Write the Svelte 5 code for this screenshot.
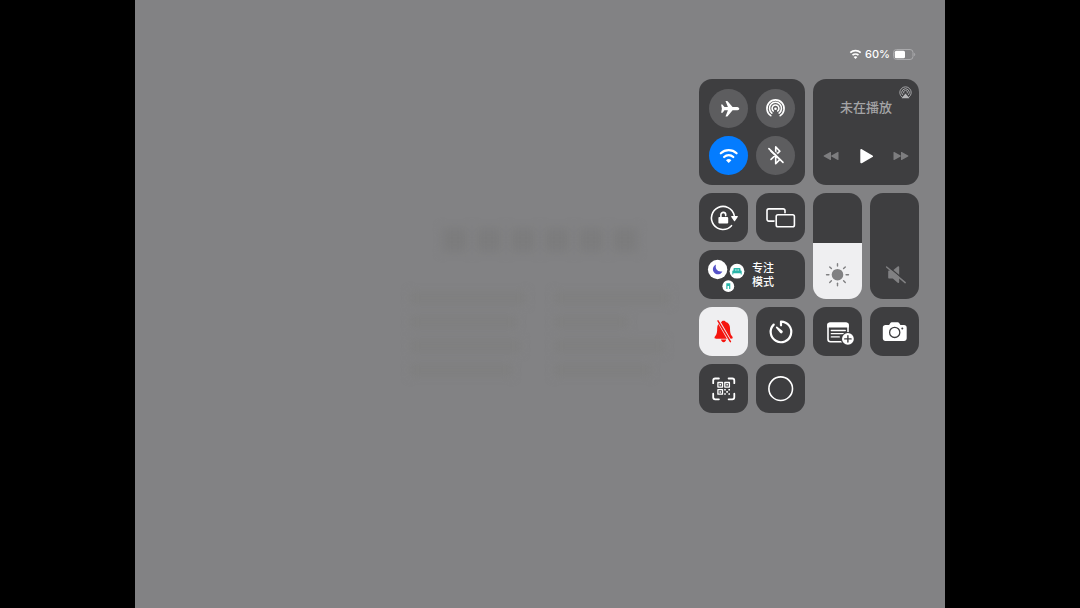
<script>
	let airplane = $state(false);
	let airdrop = $state(false);
	let wifi = $state(true);
	let bluetooth = $state(false);
	let silent = $state(true);
	let playing = $state(false);
	let brightness = $state(53);
	let volume = $state(0);

	const battery = 60;
	const rays = [0, 45, 90, 135, 180, 225, 270, 315];
	const columns = [
		[100, 92, 96, 88],
		[100, 64, 96, 84]
	];
</script>

<main>
	<div class="wallpaper" aria-hidden="true">
		<div class="title">
			{#each { length: 6 } as _}
				<div class="blob"></div>
			{/each}
		</div>
		<div class="columns">
			{#each columns as lines}
				<div class="column">
					{#each lines as width}
						<div class="line" style="width: {width}%"></div>
					{/each}
				</div>
			{/each}
		</div>
	</div>

	<div class="panel">
		<header class="status">
			<svg width="13" height="10" viewBox="0 0 13 10" role="img" aria-label="Wi-Fi">
				<path class="line-art heavy" d="M1.3 3.6a7.6 7.6 0 0 1 10.4 0M3.5 6.2a4.4 4.4 0 0 1 6 0" />
				<path class="solid" d="M6.5 10 4.6 8.1a2.7 2.7 0 0 1 3.8 0z" />
			</svg>
			<span>{battery}%</span>
			<svg width="23" height="11" viewBox="0 0 23 11" role="img" aria-label="电池">
				<rect x="0.5" y="0.5" width="19.5" height="10" rx="3" fill="none" stroke="#aaaaac" />
				<rect class="solid" x="1.8" y="1.8" width={(battery / 100) * 17} height="7.4" rx="1.5" />
				<path d="M21.2 3.8c1.4.4 1.4 3 0 3.4z" fill="#aaaaac" />
			</svg>
		</header>

		<div class="grid">
			<section class="tile big radios">
				<button class="round" class:on={airplane} aria-label="飞行模式" aria-pressed={airplane} onclick={() => (airplane = !airplane)}>
					<svg viewBox="0 0 39 39">
						<path class="solid" d="M30.3 19.7c0-1.1-1.5-1.6-2.9-1.6h-3.8l-4.8-5.7c-.3-.4-.6-.5-1-.5h-1.3l2.4 6.2h-3.4l-1.7-2.1c-.2-.3-.4-.4-.7-.4h-1l.8 4.1-.8 4.1h1c.3 0 .5-.1.7-.4l1.7-2.1h3.4l-2.4 6.2h1.3c.4 0 .7-.1 1-.5l4.8-5.7h3.8c1.4 0 2.9-.5 2.9-1.6z" />
					</svg>
				</button>
				<button class="round" class:on={airdrop} aria-label="隔空投送" aria-pressed={airdrop} onclick={() => (airdrop = !airdrop)}>
					<svg viewBox="0 0 39 39">
						<path class="line-art" d="M14.8 26.7a8.6 8.6 0 1 1 9.4 0M15.9 24.1a6 6 0 1 1 7.2 0M17.3 22a3.4 3.4 0 1 1 4.4 0" />
						<circle class="solid" cx="19.5" cy="19.7" r="1.3" />
					</svg>
				</button>
				<button class="round" class:on={wifi} aria-label="无线局域网" aria-pressed={wifi} onclick={() => (wifi = !wifi)}>
					<svg viewBox="0 0 39 39">
						<path class="line-art heavy" d="M11.8 17.3a11.4 11.4 0 0 1 15.8 0M15.1 21a6.6 6.6 0 0 1 9.2 0" />
						<path class="solid" d="m19.7 26.9-2.7-2.6a3.8 3.8 0 0 1 5.4 0z" />
					</svg>
				</button>
				<button class="round" class:on={bluetooth} aria-label="蓝牙" aria-pressed={bluetooth} onclick={() => (bluetooth = !bluetooth)}>
					<svg viewBox="0 0 39 39">
						<path class="line-art" d="m15 15.2 8.9 8.2-4.2 4.3V10.9l4.2 4.3-8.9 8.2" />
						<path d="m14 11.5 14 14" stroke="#5d5d5f" stroke-width="1.4" />
						<path class="line-art" d="M12.9 12.6 27 26.4" />
					</svg>
				</button>
			</section>

			<section class="tile big player">
				<button class="plain cast" aria-label="隔空播放">
					<svg width="13" height="13" viewBox="0 0 13 13">
						<path d="M3.2 11.2a5.7 5.7 0 1 1 6.6 0M3.6 9a3.8 3.8 0 1 1 5.8 0M4.9 7.3a1.9 1.9 0 1 1 3.2 0" fill="none" stroke="#a4a4a6" />
						<path d="m6.5 7.4 3.7 4.3c.2.3.1.6-.3.6H3.1c-.4 0-.5-.3-.3-.6z" fill="#b4b4b6" />
					</svg>
				</button>
				<h2>未在播放</h2>
				<div class="transport">
					<button class="plain" aria-label="上一首" disabled>
						<svg width="16" height="16" viewBox="0 0 16 16">
							<path class="dim" d="M8 4.4v7.2c0 .5-.4.6-.8.4L.9 8.5c-.5-.3-.5-.7 0-1L7.2 4c.4-.2.8-.1.8.4zM15.5 4.4v7.2c0 .5-.4.6-.8.4L8.4 8.5c-.5-.3-.5-.7 0-1L14.7 4c.4-.2.8-.1.8.4z" />
						</svg>
					</button>
					<button class="plain" aria-label="播放" aria-pressed={playing} onclick={() => (playing = !playing)}>
						<svg width="16" height="16" viewBox="0 0 16 16">
							<path class="solid" d="M2.3 2.1v12.2c0 1 .7 1.3 1.5.9l10.7-6.1c.8-.4.8-1.3 0-1.7L3.8 1.2c-.8-.4-1.5-.1-1.5.9z" />
						</svg>
					</button>
					<button class="plain" aria-label="下一首" disabled>
						<svg width="16" height="16" viewBox="0 0 16 16">
							<path class="dim" d="M.5 4.4v7.2c0 .5.4.6.8.4l6.3-3.5c.5-.3.5-.7 0-1L1.3 4c-.4-.2-.8-.1-.8.4zM8 4.4v7.2c0 .5.4.6.8.4l6.3-3.5c.5-.3.5-.7 0-1L8.8 4c-.4-.2-.8-.1-.8.4z" />
						</svg>
					</button>
				</div>
			</section>

			<button class="tile" aria-label="锁定方向">
				<svg viewBox="0 0 49 49">
					<path class="line-art" d="M35.2 22.4a11.5 11.5 0 1 0-2.7 10.3" />
					<path class="solid" d="M32.7 23.1h5.6c.5 0 .7.4.4.8L36 28c-.3.4-.7.4-1 0l-2.7-4.1c-.3-.4-.1-.8.4-.8z" />
					<rect class="solid" x="19.4" y="24.1" width="9.8" height="6.4" rx="1" />
					<path class="line-art" d="M21.9 24.6v-2.8a2.4 2.4 0 0 1 4.8 0v.8" />
				</svg>
			</button>

			<button class="tile" aria-label="屏幕镜像">
				<svg viewBox="0 0 49 49">
					<path class="line-art" d="M18 28.1h-5.2a1.8 1.8 0 0 1-1.8-1.8v-8.6a1.8 1.8 0 0 1 1.8-1.8h14.4a1.8 1.8 0 0 1 1.8 1.8v2" />
					<rect class="line-art" x="20.2" y="21.8" width="18.2" height="12" rx="1.8" />
				</svg>
			</button>

			<label class="tile slider">
				<input type="range" aria-label="亮度" bind:value={brightness} style="--fill: {brightness}%" />
				<svg viewBox="0 0 49 49">
					<circle cx="24.5" cy="24.7" r="5.8" fill="#808082" />
					{#each rays as angle}
						<path d="M24.5 16.1v-2.4" transform="rotate({angle} 24.5 24.7)" stroke="#808082" stroke-width="1.4" stroke-linecap="round" />
					{/each}
				</svg>
			</label>

			<label class="tile slider">
				<input type="range" aria-label="音量" bind:value={volume} style="--fill: {volume}%" />
				<svg viewBox="0 0 49 49">
					<path d="M18.2 21.6c0-.6.4-1 1-1h3.6l4.9-4.1c.7-.6 1.5-.3 1.5.6v15c0 .9-.8 1.2-1.5.6l-4.9-4.1h-3.6c-.6 0-1-.4-1-1z" fill="#808082" />
					<path d="m17.3 15.7 19 16" stroke="#3e3e40" stroke-width="1.4" />
					<path d="m16.6 17 18.6 15.6" stroke="#808082" stroke-width="1.5" stroke-linecap="round" />
				</svg>
			</label>

			<button class="tile wide focus">
				<svg width="49" height="49" viewBox="0 0 49 49">
					<circle class="solid" cx="18.6" cy="19.5" r="9.7" />
					<path d="M17 14.6c-1.3 4.5 2 7.9 6.4 6.8-1.2 2.4-3.6 3.3-5.7 2.8-4.8-1.3-5.1-7.5-.7-9.6z" fill="#5552c8" />
					<circle class="solid" cx="38" cy="21.2" r="7.4" />
					<path d="M34.5 20.5v-1.4c0-.6.4-1 1-1h5c.6 0 1 .4 1 1v1.4c.9 0 1.2.4 1.2 1v2.9h-1v-1.2h-7.4v1.2h-1v-2.9c0-.6.3-1 1.2-1z" fill="#2ab5a9" />
					<path d="M36 20.4v-1h1.6v1zM38.4 20.4v-1H40v1z" fill="#d9f3f0" />
					<circle class="solid" cx="29.3" cy="36.2" r="5.9" />
					<path d="M27.3 33.3h4v5.6h-1.2v-3h-1.6v3h-1.2z" fill="#2ab5a9" />
				</svg>
				<span>专注<br />模式</span>
			</button>

			<button class="tile" class:lit={silent} aria-label="静音模式" aria-pressed={silent} onclick={() => (silent = !silent)}>
				<svg viewBox="0 0 49 49">
					<path class="bell" d="M24.6 13.8c-1.1 0-1.8.5-2.2 1.2-2.8.7-4.2 3-4.2 6 0 4-.4 6.2-1.7 7.8-.7.8-1 1.2-1 1.8 0 .8.6 1.2 1.4 1.2h15.4c.8 0 1.4-.4 1.4-1.2 0-.6-.3-1-1-1.8-1.3-1.6-1.7-3.8-1.7-7.8 0-3-1.4-5.3-4.2-6-.4-.7-1.1-1.2-2.2-1.2zM22 32.6h5.2c-.2 1.5-1.2 2.6-2.6 2.6S22.200 34.1 22 32.600z" />
					<path class="gap" d="m18.800 13 12.800 22" />
					<path class="slash" d="m19 13.800 12.400 20.800" />
				</svg>
			</button>

			<button class="tile" aria-label="计时器">
				<svg viewBox="0 0 49 49">
					<path class="line-art heavy" d="M25 18.300v-3.700a10.300 10.300 0 1 1-7.300 3" />
					<path class="solid" d="m21.300 19.800 5.100 3.900a1.600 1.600 0 0 1-2.200 2.300l-4.100-4.900c-.7-.9.300-2 1.200-1.300z" />
				</svg>
			</button>

			<button class="tile" aria-label="快速备忘录">
				<svg viewBox="0 0 49 49">
					<rect class="line-art" x="15" y="16.2" width="20" height="18.6" rx="2.5" />
					<path class="solid" d="M14.2 20.4v-2.6a2.4 2.4 0 0 1 2.4-2.400h16.800a2.4 2.4 0 0 1 2.4 2.4v2.6z" />
					<path class="line-art thin" d="M18.300 23.500h14M18.300 26.700h14M18.300 29.900h8" />
					<circle cx="34.900" cy="31.900" r="7" fill="#3e3e40" />
					<circle class="solid" cx="34.900" cy="31.900" r="5.900" />
					<path d="M34.900 28.700v6.400M31.700 31.900h6.400" stroke="#3e3e40" stroke-width="1.400" stroke-linecap="round" />
				</svg>
			</button>

			<button class="tile" aria-label="相机">
				<svg viewBox="0 0 49 49">
					<path class="solid" d="M15.500 18h3.600l1.300-1.900c.3-.5.8-.8 1.400-.8h5.900c.6 0 1.100.3 1.400.8l1.300 1.900h3.600c1.600 0 2.700 1.100 2.700 2.700v10.600c0 1.600-1.100 2.700-2.700 2.700H15.500c-1.600 0-2.700-1.100-2.700-2.700V20.700c0-1.600 1.100-2.700 2.700-2.700z" />
					<circle cx="24.700" cy="25.400" r="5.100" fill="none" stroke="#3e3e40" stroke-width="1.300" />
					<circle cx="32.300" cy="21.500" r="1" fill="#3e3e40" />
				</svg>
			</button>

			<button class="tile" aria-label="扫描二维码">
				<svg viewBox="0 0 49 49">
					<path class="line-art thick" d="M14.200 19.200v-2.700a2 2 0 0 1 2-2h3.700M29.600 14.500h3.700a2 2 0 0 1 2 2v2.700M35.300 29.700v3.600a2 2 0 0 1-2 2h-3.700M19.900 35.300h-3.700a2 2 0 0 1-2-2v-3.600" />
					<path class="line-art thin" d="M18.900 18.500h4.600v4.600h-4.600zM25.800 18.500h4.600v4.600h-4.600zM18.900 25.600h4.600v4.600h-4.600z" />
					<path class="solid" d="M20.500 20.100H22v1.500h-1.500zM27.400 20.100h1.500v1.500h-1.500zM20.500 27.200H22v1.500h-1.500zM25.200 25h1.600v1.600h-1.600zM29.400 25H31v1.600h-1.600zM27.300 27.100h1.600v1.600h-1.600zM25.200 29.200h1.600v1.600h-1.600zM29.400 29.200H31v1.600h-1.600z" />
				</svg>
			</button>

			<button class="tile" aria-label="辅助触控">
				<svg viewBox="0 0 49 49">
					<circle class="line-art" cx="24.700" cy="24.700" r="11.800" />
				</svg>
			</button>
		</div>
	</div>
</main>

<style>
	:global(body) {
		margin: 0;
		background: #000;
	}

	main {
		display: grid;
		width: 75%;
		min-height: 100vh;
		margin: 0 auto;
		background: #828284;
		color: #fff;
		font-family: Inter, 'Noto Sans CJK SC', sans-serif;
	}

	.wallpaper,
	.panel {
		grid-area: 1 / 1;
	}

	.wallpaper {
		display: flex;
		flex-direction: column;
		align-items: center;
		gap: 40px;
		padding-top: 228px;
		filter: blur(5px);
	}

	.title {
		display: flex;
		gap: 8px;
	}

	.blob {
		width: 26px;
		height: 24px;
		background: #7c7c7d;
	}

	.columns {
		display: flex;
		gap: 28px;
	}

	.column {
		display: flex;
		flex-direction: column;
		gap: 12px;
		width: 116px;
	}

	.line {
		height: 12px;
		background: #7f7f7f;
	}

	.panel {
		display: flex;
		flex-direction: column;
		align-items: flex-end;
		padding: 46px 26px 26px;
	}

	.status {
		display: flex;
		align-items: center;
		gap: 3px;
		height: 16px;
		margin: 0 3px 17px 0;
		font-size: 11px;
		font-weight: 500;
		line-height: 16px;
	}

	.grid {
		display: grid;
		grid-template-columns: repeat(4, 49px);
		grid-auto-rows: 49px;
		gap: 8px;
	}

	button {
		padding: 0;
		border: none;
		color: inherit;
		font-family: inherit;
		cursor: pointer;
	}

	svg {
		display: block;
	}

	.tile {
		overflow: hidden;
		border-radius: 13px;
		background: #3e3e40;
	}

	.big {
		grid-column: span 2;
		grid-row: span 2;
	}

	.wide {
		grid-column: span 2;
	}

	.lit {
		background: #efeff1;
	}

	.radios {
		display: grid;
		grid-template-columns: 1fr 1fr;
		gap: 8px;
		padding: 10px;
	}

	.round {
		border-radius: 50%;
		background: #5d5d5f;
	}

	.round.on {
		background: #047cff;
	}

	.player {
		display: flex;
		flex-direction: column;
		padding: 7px;
	}

	.plain {
		background: none;
	}

	.cast {
		align-self: flex-end;
	}

	h2 {
		margin: 0;
		color: #a4a4a6;
		font-size: 13px;
		font-weight: 500;
		line-height: 16px;
		text-align: center;
	}

	.transport {
		display: flex;
		justify-content: space-between;
		margin-top: 33px;
		padding: 0 3px;
	}

	.slider {
		display: grid;
		grid-row: span 2;
	}

	.slider input,
	.slider svg {
		grid-area: 1 / 1;
	}

	.slider svg {
		align-self: end;
		pointer-events: none;
	}

	.slider input {
		width: 49px;
		height: 106px;
		margin: 0;
		appearance: none;
		writing-mode: vertical-lr;
		direction: rtl;
		background: linear-gradient(to top, #efeff1 var(--fill), #3e3e40 var(--fill));
		cursor: pointer;
	}

	.slider input::-webkit-slider-thumb {
		appearance: none;
		width: 49px;
		height: 1px;
		background: transparent;
	}

	.focus {
		display: flex;
		align-items: center;
		gap: 4px;
		font-size: 11px;
		font-weight: 500;
		line-height: 14px;
	}

	.solid {
		fill: #fff;
	}

	.dim {
		fill: #7d7d7f;
	}

	.line-art {
		fill: none;
		stroke: #fff;
		stroke-width: 1.6;
		stroke-linecap: round;
		stroke-linejoin: round;
	}

	.thin {
		stroke-width: 1.3;
	}

	.thick {
		stroke-width: 1.8;
	}

	.heavy {
		stroke-width: 2.2;
	}

	.bell {
		fill: #f5150f;
	}

	.gap {
		stroke: #efeff1;
		stroke-width: 3.2;
	}

	.slash {
		stroke: #f5150f;
		stroke-width: 1.5;
		stroke-linecap: round;
	}

	.status .heavy {
		stroke-width: 1.7;
		stroke-linecap: butt;
	}
</style>
